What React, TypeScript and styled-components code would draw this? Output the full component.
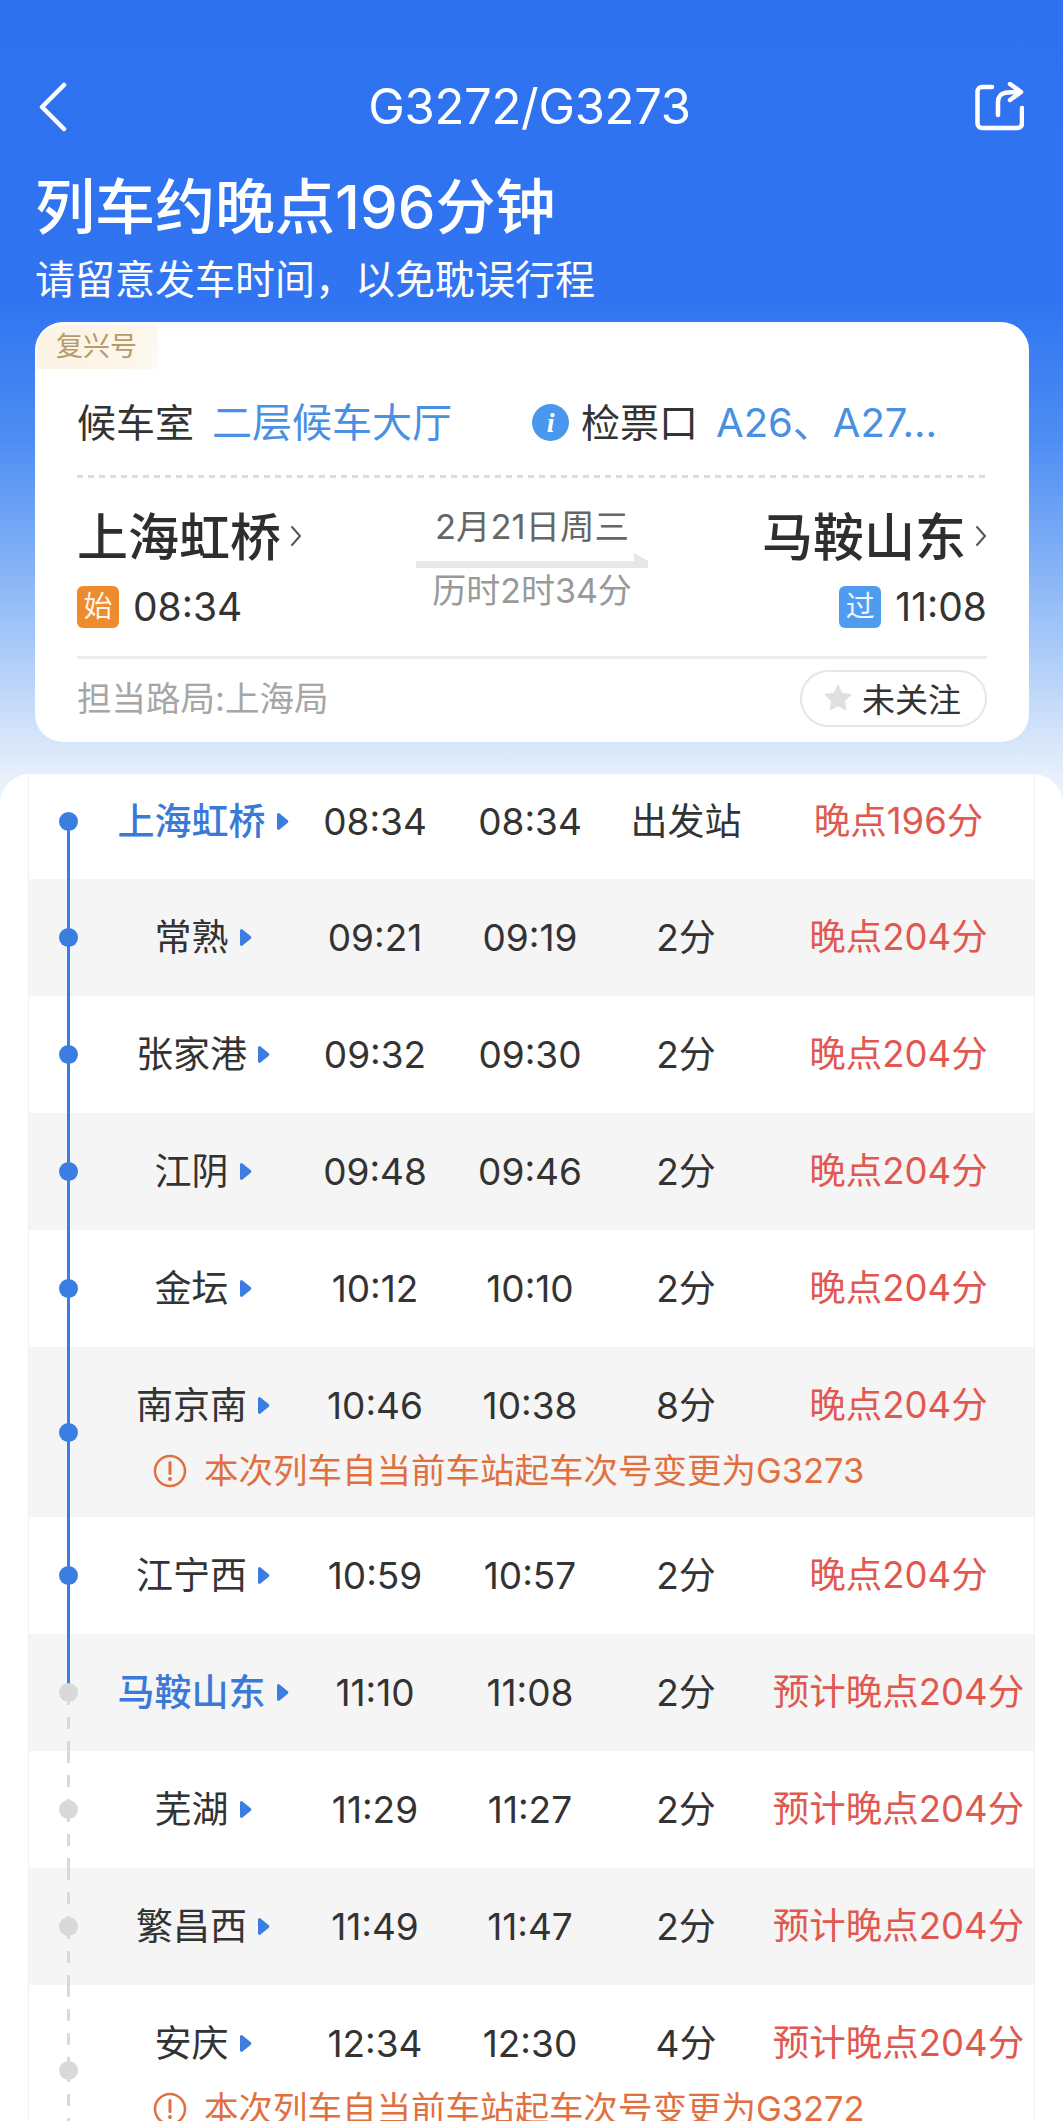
import React from "react";
import styled, { createGlobalStyle } from "styled-components";

const FONT = `Inter, "Noto Sans CJK SC", "Noto Sans", sans-serif`;
const BLUE = "#3b7de0";

const GlobalStyle = createGlobalStyle`
  html, body {
    margin: 0;
    padding: 0;
    background: #fff;
  }
  body {
    font-family: ${FONT};
    color: #333;
  }
  * {
    box-sizing: border-box;
  }
`;

const Page = styled.div`
  width: 1063px;
  height: 2121px;
  overflow: hidden;
  background: linear-gradient(
    180deg,
    #2f72f0 0,
    #3074f1 300px,
    #4d8df3 440px,
    #a5c8f8 640px,
    #e6effb 773px,
    #ffffff 860px
  );
`;

const Header = styled.header`
  padding: 70px 35px 0;
  color: #fff;
`;

const NavBar = styled.div`
  height: 74px;
  margin-right: 4px;
  display: flex;
  align-items: center;
  justify-content: space-between;
`;

const NavIcon = styled.svg`
  display: block;
  flex: none;
`;

const NavTitle = styled.h1`
  margin: 0;
  font-size: 49px;
  font-weight: 400;
  letter-spacing: -0.3px;
  line-height: 74px;
`;

const DelayTitle = styled.h2`
  margin: 26px 0 0;
  font-size: 60px;
  font-weight: 500;
  line-height: 74px;
`;

const DelayHint = styled.p`
  margin: 8px 0 0;
  font-size: 40px;
  line-height: 56px;
  font-weight: 400;
`;

const TrainCard = styled.section`
  position: relative;
  margin: 14px 34px 0 35px;
  height: 420px;
  padding: 0 42px;
  border-radius: 28px;
  background: #fff;
`;

const TrainTag = styled.span`
  position: absolute;
  left: 2px;
  top: 3px;
  width: 121px;
  height: 44px;
  padding-left: 19px;
  border-radius: 24px 0 0 0;
  background: linear-gradient(100deg, #fbf3e4, #fdf6ea 80%, #fefaf3);
  color: #b69b6c;
  font-size: 27px;
  line-height: 44px;
`;

const InfoRow = styled.div`
  height: 156px;
  padding-top: 45px;
  display: flex;
  align-items: center;
  background: repeating-linear-gradient(90deg, #dcdcdc 0 6px, transparent 6px 11px) bottom / 100% 3px no-repeat;
`;

const InfoLabel = styled.span`
  font-size: 39px;
  line-height: 64px;
  color: #333;
  white-space: nowrap;
`;

const InfoValue = styled.span<{ $width: number }>`
  width: ${(p) => p.$width}px;
  margin-left: 18px;
  font-size: 40px;
  line-height: 64px;
  color: #4a90e2;
  white-space: nowrap;
`;

const InfoBadge = styled.span`
  flex: none;
  width: 37px;
  height: 37px;
  margin-right: 12px;
  border-radius: 50%;
  background: #4a97ee;
  color: #fff;
  font-family: "Liberation Serif", serif;
  font-style: italic;
  font-weight: 700;
  font-size: 28px;
  line-height: 37px;
  text-align: center;
`;

const RouteRow = styled.div`
  height: 181px;
  padding-top: 23px;
  display: grid;
  grid-template-columns: 1fr 232px 1fr;
  border-bottom: 3px solid #ececec;
`;

const RouteEnd = styled.div<{ $right?: boolean }>`
  display: flex;
  flex-direction: column;
  align-items: ${(p) => (p.$right ? "flex-end" : "flex-start")};
`;

const StationTitle = styled.div`
  display: flex;
  align-items: center;
  gap: 9px;
  height: 66px;
  font-size: 51px;
  font-weight: 500;
  color: #2e2e2e;
  white-space: nowrap;
`;

const Chevron = styled.svg`
  display: block;
  flex: none;
  margin-top: 4px;
`;

const TimeLine = styled.div`
  display: flex;
  align-items: center;
  gap: 14px;
  margin-top: 19px;
  font-size: 39px;
  line-height: 42px;
  color: #333;
`;

const StopBadge = styled.span<{ $color: string }>`
  width: 42px;
  height: 42px;
  border-radius: 6px;
  background: ${(p) => p.$color};
  color: rgba(255, 255, 255, 0.92);
  font-size: 29px;
  line-height: 42px;
  text-align: center;
`;

const RouteMiddle = styled.div`
  display: flex;
  flex-direction: column;
  align-items: center;
  padding-top: 3px;
`;

const TravelDate = styled.div`
  font-size: 34.5px;
  line-height: 46px;
  color: #666;
  white-space: nowrap;
`;

const ArrowLine = styled.div`
  position: relative;
  width: 232px;
  height: 7px;
  margin-top: 11px;
  background: #e7e7e7;

  &::after {
    content: "";
    position: absolute;
    right: 0;
    top: -8px;
    border-left: 14px solid #e7e7e7;
    border-top: 8px solid transparent;
  }
`;

const TravelTime = styled.div`
  font-size: 34px;
  line-height: 46px;
  color: #999;
  white-space: nowrap;
`;

const CardFooter = styled.div`
  height: 78px;
  display: flex;
  align-items: center;
  justify-content: space-between;
`;

const BureauText = styled.span`
  margin-bottom: 5px;
  font-size: 34.5px;
  color: #a6a6a6;
`;

const FollowButton = styled.div`
  width: 187px;
  height: 57px;
  display: flex;
  align-items: center;
  gap: 8px;
  padding-left: 20px;
  border: 2px solid #e6e6e6;
  border-radius: 29px;
  font-size: 33px;
  color: #333;
  white-space: nowrap;
`;

const StopsPanel = styled.section`
  margin-top: 32px;
  height: 1348px;
  overflow: hidden;
  border-radius: 30px 30px 0 0;
  background: #fff;
`;

const StopsTable = styled.div`
  width: 1007px;
  margin: -10px 0 0 28px;
  border-left: 1px solid #eef0f4;
  border-right: 1px solid #eef0f4;
`;

const StopRow = styled.div<{ $shaded: boolean }>`
  display: grid;
  grid-template-columns: 78px 192px 152px 158px 154px 1fr;
  align-items: center;
  padding: 30px 0;
  background: ${(p) => (p.$shaded ? "#f5f5f5" : "#fff")};
  font-size: 37px;
  line-height: 57px;
  color: #333;
  text-align: center;
  white-space: nowrap;

  &:first-child {
    padding: 29px 0;
  }
`;

const lineBackground = (kind?: string) => {
  if (kind === "done") return BLUE;
  if (kind === "todo") return "repeating-linear-gradient(180deg, #d9d9d9 0 12px, transparent 12px 24px)";
  return "none";
};

const Rail = styled.div<{ $up?: string; $down?: string; $span: number }>`
  position: relative;
  grid-row: 1 / span ${(p) => p.$span};
  align-self: stretch;
  margin: -30px 0;
  display: flex;
  align-items: center;
  justify-content: center;

  &::before,
  &::after {
    content: "";
    position: absolute;
    left: 38px;
    width: 3px;
    height: 50%;
  }
  &::before {
    top: 0;
    background: ${(p) => lineBackground(p.$up)};
  }
  &::after {
    bottom: 0;
    background: ${(p) => lineBackground(p.$down)};
  }
`;

const Dot = styled.span<{ $passed: boolean }>`
  position: relative;
  z-index: 1;
  width: 19px;
  height: 19px;
  border-radius: 50%;
  background: ${(p) => (p.$passed ? BLUE : "#d9d9d9")};
`;

const StopName = styled.div<{ $main: boolean }>`
  display: flex;
  align-items: center;
  justify-content: center;
  gap: 11px;
  color: ${(p) => (p.$main ? "#3a79d6" : "#333")};
  font-weight: ${(p) => (p.$main ? 500 : 400)};
`;

const StopStatus = styled.div`
  color: #e0584f;
  font-size: 36.5px;
`;

const Notice = styled.div`
  grid-column: 2 / -1;
  display: flex;
  align-items: center;
  gap: 17px;
  margin: 10px 0 -10px;
  padding-left: 46px;
  height: 53px;
  font-size: 34.5px;
  line-height: 46px;
  color: #e0703f;
  text-align: left;
`;

const BackIcon = () => (
  <NavIcon width="50" height="50" viewBox="0 0 50 50" fill="none">
    <path d="M29 3 7 25l22 22" stroke="#fff" strokeWidth="4.5" strokeLinecap="round" strokeLinejoin="round" />
  </NavIcon>
);

const ShareIcon = () => (
  <NavIcon width="50" height="50" viewBox="0 0 50 50" fill="none">
    <path
      d="M18 5H8a4.5 4.5 0 0 0-4.5 4.5v32A4.5 4.5 0 0 0 8 46h35.5a4.5 4.5 0 0 0 4.5-4.5V26"
      stroke="#fff"
      strokeWidth="4.5"
      strokeLinecap="round"
    />
    <path
      d="M24 33V20c0-5 3-9 9-9.5L47 10M36 2l11 8-11 8"
      stroke="#fff"
      strokeWidth="4.5"
      strokeLinecap="round"
      strokeLinejoin="round"
    />
  </NavIcon>
);

const SmallChevron = () => (
  <Chevron width="12" height="24" viewBox="0 0 12 24" fill="none">
    <path d="M2 3l8 9-8 9" stroke="#555" strokeWidth="2" strokeLinecap="round" strokeLinejoin="round" />
  </Chevron>
);

const StarIcon = () => (
  <svg width="32" height="32" viewBox="0 0 24 24">
    <path
      d="M12 2.5l2.9 6.1 6.6.9-4.8 4.6 1.2 6.6L12 17.6l-5.9 3.1 1.2-6.6L2.5 9.5l6.6-.9z"
      fill="#e0e0e0"
      stroke="#e0e0e0"
      strokeLinejoin="round"
    />
  </svg>
);

const TriangleIcon = () => (
  <svg width="12" height="19" viewBox="0 0 12 19" style={{ flex: "none" }}>
    <path d="M2.5 1.5 10.5 8a2 2 0 0 1 0 3l-8 6.5A1.5 1.5 0 0 1 0 16.5v-14a1.5 1.5 0 0 1 2.5-1z" fill={BLUE} />
  </svg>
);

const WarnIcon = () => (
  <svg width="34" height="34" viewBox="0 0 34 34" fill="none" style={{ flex: "none" }}>
    <circle cx="17" cy="17" r="15" stroke="#e0703f" strokeWidth="2.5" />
    <path d="M17 8.5v11" stroke="#e0703f" strokeWidth="3" strokeLinecap="round" />
    <circle cx="17" cy="25" r="2" fill="#e0703f" />
  </svg>
);

type Stop = {
  name: string;
  arrive: string;
  depart: string;
  stay: string;
  status: string;
  main?: boolean;
  notice?: string;
};

const STOPS: Stop[] = [
  { name: "上海虹桥", arrive: "08:34", depart: "08:34", stay: "出发站", status: "晚点196分", main: true },
  { name: "常熟", arrive: "09:21", depart: "09:19", stay: "2分", status: "晚点204分" },
  { name: "张家港", arrive: "09:32", depart: "09:30", stay: "2分", status: "晚点204分" },
  { name: "江阴", arrive: "09:48", depart: "09:46", stay: "2分", status: "晚点204分" },
  { name: "金坛", arrive: "10:12", depart: "10:10", stay: "2分", status: "晚点204分" },
  {
    name: "南京南",
    arrive: "10:46",
    depart: "10:38",
    stay: "8分",
    status: "晚点204分",
    notice: "本次列车自当前车站起车次号变更为G3273",
  },
  { name: "江宁西", arrive: "10:59", depart: "10:57", stay: "2分", status: "晚点204分" },
  { name: "马鞍山东", arrive: "11:10", depart: "11:08", stay: "2分", status: "预计晚点204分", main: true },
  { name: "芜湖", arrive: "11:29", depart: "11:27", stay: "2分", status: "预计晚点204分" },
  { name: "繁昌西", arrive: "11:49", depart: "11:47", stay: "2分", status: "预计晚点204分" },
  {
    name: "安庆",
    arrive: "12:34",
    depart: "12:30",
    stay: "4分",
    status: "预计晚点204分",
    notice: "本次列车自当前车站起车次号变更为G3272",
  },
];

const PASSED_COUNT = 7;

const App = () => {
  return (
    <Page>
      <GlobalStyle />
      <Header>
        <NavBar>
          <BackIcon />
          <NavTitle>G3272/G3273</NavTitle>
          <ShareIcon />
        </NavBar>
        <DelayTitle>列车约晚点196分钟</DelayTitle>
        <DelayHint>请留意发车时间，以免耽误行程</DelayHint>
      </Header>

      <TrainCard>
        <TrainTag>复兴号</TrainTag>
        <InfoRow>
          <InfoLabel>候车室</InfoLabel>
          <InfoValue $width={320}>二层候车大厅</InfoValue>
          <InfoBadge>i</InfoBadge>
          <InfoLabel>检票口</InfoLabel>
          <InfoValue $width={230}>A26、A27...</InfoValue>
        </InfoRow>
        <RouteRow>
          <RouteEnd>
            <StationTitle>
              上海虹桥
              <SmallChevron />
            </StationTitle>
            <TimeLine>
              <StopBadge $color="#ee8b2f">始</StopBadge>
              08:34
            </TimeLine>
          </RouteEnd>
          <RouteMiddle>
            <TravelDate>2月21日周三</TravelDate>
            <ArrowLine />
            <TravelTime>历时2时34分</TravelTime>
          </RouteMiddle>
          <RouteEnd $right>
            <StationTitle>
              马鞍山东
              <SmallChevron />
            </StationTitle>
            <TimeLine>
              <StopBadge $color="#4f9bf0">过</StopBadge>
              11:08
            </TimeLine>
          </RouteEnd>
        </RouteRow>
        <CardFooter>
          <BureauText>担当路局:上海局</BureauText>
          <FollowButton>
            <StarIcon />
            未关注
          </FollowButton>
        </CardFooter>
      </TrainCard>

      <StopsPanel>
        <StopsTable>
          {STOPS.map((stop, i) => (
            <StopRow key={stop.name} $shaded={i % 2 === 1}>
              <Rail
                $span={stop.notice ? 2 : 1}
                $up={i === 0 ? undefined : i <= PASSED_COUNT ? "done" : "todo"}
                $down={i < PASSED_COUNT ? "done" : "todo"}
              >
                <Dot $passed={i < PASSED_COUNT} />
              </Rail>
              <StopName $main={!!stop.main}>
                {stop.name}
                <TriangleIcon />
              </StopName>
              <div>{stop.arrive}</div>
              <div>{stop.depart}</div>
              <div>{stop.stay}</div>
              <StopStatus>{stop.status}</StopStatus>
              {stop.notice && (
                <Notice>
                  <WarnIcon />
                  {stop.notice}
                </Notice>
              )}
            </StopRow>
          ))}
        </StopsTable>
      </StopsPanel>
    </Page>
  );
};

export default App;
